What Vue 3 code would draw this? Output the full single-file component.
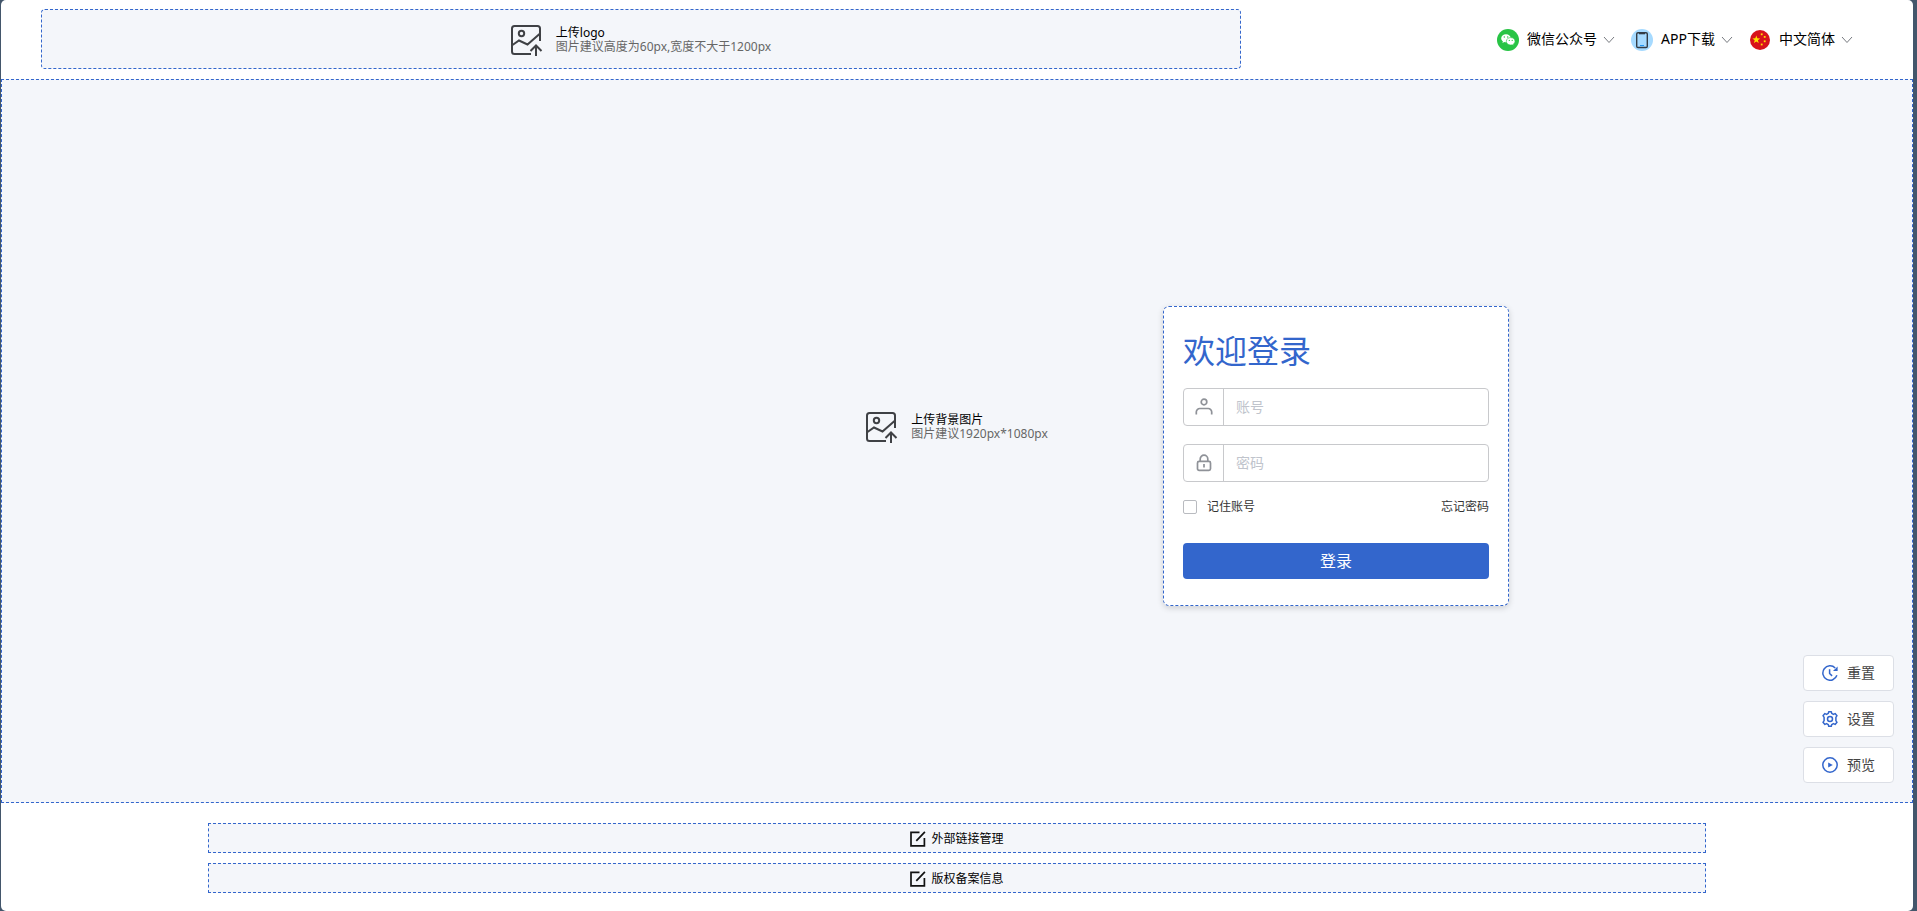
<template>
  <div class="login-page">
    <header class="header">
      <button type="button" class="logo-upload dashed">
        <svg class="upload-icon" viewBox="1 0 32 32">
          <path :d="uploadPath" />
          <circle cx="11.5" cy="9.5" r="2.7" />
        </svg>
        <span class="upload-text">
          <span class="upload-title">上传logo</span>
          <span class="upload-tip">图片建议高度为60px,宽度不大于1200px</span>
        </span>
      </button>

      <nav class="nav">
        <button type="button" class="nav-item">
          <svg class="nav-icon" viewBox="0 0 22 22">
            <circle cx="11" cy="11" r="11" fill="#28c445" />
            <path d="M9 5.2c-2.8 0-4.8 1.8-4.8 4 0 1.3.7 2.4 1.7 3.1l-.5 1.6 1.9-.9c.6.1 1.1.2 1.7.2 2.7 0 4.8-1.8 4.8-4s-2.1-4-4.8-4z" fill="#fff" />
            <path d="M13.7 8.6c-2.5 0-4.4 1.6-4.4 3.7s1.9 3.7 4.4 3.7c.5 0 1-.1 1.5-.2l1.5.8-.4-1.4c1-.7 1.7-1.7 1.7-2.9 0-2.1-1.9-3.7-4.3-3.7z" fill="#fff" stroke="#28c445" stroke-width=".6" />
            <g fill="#28c445">
              <circle cx="7.3" cy="8" r=".7" />
              <circle cx="10.7" cy="8" r=".7" />
              <circle cx="12.3" cy="11.4" r=".6" />
              <circle cx="15.2" cy="11.4" r=".6" />
            </g>
          </svg>
          <span class="nav-label">微信公众号</span>
          <svg class="arrow" viewBox="0 0 14 14"><path d="M2 4l5 5.5L12 4" /></svg>
        </button>
        <button type="button" class="nav-item">
          <svg class="nav-icon" viewBox="0 0 22 22">
            <circle cx="11" cy="11" r="11" fill="#a6daff" />
            <rect x="5.7" y="3.7" width="10.6" height="14.8" rx="1.3" fill="none" stroke="#333b44" stroke-width="1.4" />
            <path d="M8 4h6v1.3H8z" fill="#333b44" />
            <path d="M9 16.5h4" stroke="#2196f3" stroke-width="1" />
          </svg>
          <span class="nav-label">APP下载</span>
          <svg class="arrow" viewBox="0 0 14 14"><path d="M2 4l5 5.5L12 4" /></svg>
        </button>
        <button type="button" class="nav-item">
          <svg class="nav-icon" viewBox="0 0 22 22">
            <circle cx="11" cy="11" r="10" fill="#d8131b" />
            <g fill="#ffe100">
              <path d="M7.3 6.6l1 2.7 2.9.1-2.3 1.8.8 2.8-2.4-1.6L4.9 14l.8-2.8-2.3-1.8 2.9-.1z" />
              <rect x="11.8" y="4.4" width="1.8" height="1.8" />
              <rect x="14.8" y="7" width="1.8" height="1.8" />
              <rect x="14.8" y="11.4" width="1.8" height="1.8" />
              <rect x="11.8" y="14.6" width="1.8" height="1.8" />
            </g>
          </svg>
          <span class="nav-label">中文简体</span>
          <svg class="arrow" viewBox="0 0 14 14"><path d="M2 4l5 5.5L12 4" /></svg>
        </button>
      </nav>
    </header>

    <main class="main dashed">
      <button type="button" class="bg-upload">
        <svg class="upload-icon" viewBox="1 0 32 32">
          <path :d="uploadPath" />
          <circle cx="11.5" cy="9.5" r="2.7" />
        </svg>
        <span class="upload-text">
          <span class="upload-title">上传背景图片</span>
          <span class="upload-tip">图片建议1920px*1080px</span>
        </span>
      </button>

      <form class="login-card dashed" @submit.prevent>
        <h1 class="login-title">欢迎登录</h1>
        <div class="field">
          <label class="field-prefix" for="account" aria-label="账号">
            <svg viewBox="0 0 18 18">
              <circle cx="9" cy="4" r="2.8" />
              <path d="M1.3 16.5V14a3.5 3.5 0 0 1 3.5-3.5h8.4a3.5 3.5 0 0 1 3.5 3.5v2.5" />
            </svg>
          </label>
          <input id="account" v-model="form.account" type="text" placeholder="账号" />
        </div>
        <div class="field">
          <label class="field-prefix" for="password" aria-label="密码">
            <svg viewBox="0 0 18 18">
              <rect x="2.5" y="7.3" width="13" height="9" rx="1.6" />
              <path d="M5.2 7V5a3.8 3.8 0 0 1 7.6 0v2M9 10v3.4" />
            </svg>
          </label>
          <input id="password" v-model="form.password" type="password" placeholder="密码" />
        </div>
        <div class="options">
          <label class="remember">
            <input v-model="form.remember" type="checkbox" />
            <span>记住账号</span>
          </label>
          <a href="#">忘记密码</a>
        </div>
        <button type="submit" class="submit">登录</button>
      </form>

      <div class="tools">
        <button type="button" class="tool">
          <svg viewBox="0 0 16 16">
            <path d="M14.9 10.3A7.2 7.2 0 1 1 13.2 3M7.6 4.3v4.2l2.5 2.4" />
            <path class="solid" d="M15.6 1.4v4.7h-4.6z" />
          </svg>
          <span>重置</span>
        </button>
        <button type="button" class="tool">
          <svg viewBox="0 0 16 16">
            <path d="M6.3 2.4 6.7.8h2.6l.4 1.6 1.7 1 1.7-.8 1.9 2.1-1.1 1.6v3.4l1.1 1.6-1.9 2.1-1.7-.8-1.7 1-.4 1.6H6.7l-.4-1.6-1.7-1-1.7.8L1 11.3l1.1-1.6V6.3L1 4.7l1.9-2.1 1.7.8z" />
            <circle cx="8" cy="8" r="2.5" />
          </svg>
          <span>设置</span>
        </button>
        <button type="button" class="tool">
          <svg viewBox="0 0 16 16">
            <circle cx="8" cy="8" r="7.2" />
            <path class="solid" d="M6.2 5.4 10.8 8l-4.6 2.6z" />
          </svg>
          <span>预览</span>
        </button>
      </div>
    </main>

    <footer class="footer">
      <button v-for="item in footerItems" :key="item" type="button" class="footer-item dashed">
        <svg viewBox="0 0 16 16">
          <path d="M9.5 1.4H1v13.4h13.4V7M6.3 9.8l8.6-9" />
        </svg>
        <span>{{ item }}</span>
      </button>
    </footer>
  </div>
</template>

<script setup>
import { reactive } from 'vue';

// Picture frame, hill line and upload arrow
const uploadPath =
  'M30 17V4.5A2.5 2.5 0 0 0 27.5 2h-23A2.5 2.5 0 0 0 2 4.5v23A2.5 2.5 0 0 0 4.5 30H21M2.5 21 9 16.5l8.5 4L29.5 10M26 32V22M20.5 27l5.5-5.5 5.5 5.5';

const footerItems = ['外部链接管理', '版权备案信息'];

const form = reactive({
  account: '',
  password: '',
  remember: false
});
</script>

<style>
body {
  background: #43566b;
}
</style>

<style scoped>
.login-page,
.login-page * {
  box-sizing: border-box;
}

.login-page {
  display: flex;
  flex-direction: column;
  min-height: 100vh;
  margin: 0 4px 0 1px;
  border-radius: 5px;
  background: #fff;
  color: #000;
  font-family: "Noto Sans", "Noto Sans CJK SC", sans-serif;
  font-size: 14px;
  line-height: 20px;
}

button,
input {
  margin: 0;
  padding: 0;
  border: 0;
  background: none;
  color: inherit;
  font: inherit;
}

button {
  cursor: pointer;
}

svg {
  flex: none;
  fill: none;
}

.dashed {
  border: 1px dashed #3366cc;
}

/* Header */
.header {
  display: flex;
  justify-content: space-between;
  align-items: flex-start;
  padding: 9px 59px 10px 40px;
}

.logo-upload {
  display: flex;
  justify-content: center;
  align-items: center;
  flex: 0 1 1200px;
  height: 60px;
  padding-top: 2px;
  border-radius: 4px;
  background: #f4f6fa;
}

.upload-icon {
  width: 32px;
  height: 32px;
  margin-right: 13px;
  stroke: #3f4145;
  stroke-width: 2;
}

.upload-text {
  display: flex;
  flex-direction: column;
  font-size: 12px;
  line-height: 14px;
  text-align: left;
}

.upload-tip {
  color: #666;
}

.nav {
  display: flex;
  gap: 15px;
  padding-top: 20px;
}

.nav-item {
  display: flex;
  align-items: center;
  white-space: nowrap;
}

.nav-icon {
  width: 22px;
  height: 22px;
  margin-right: 8px;
}

.nav-label {
  padding-bottom: 2px;
}

.arrow {
  width: 14px;
  height: 14px;
  margin-left: 5px;
  stroke: #777a80;
}

/* Background area, its layers share one grid cell */
.main {
  display: grid;
  flex: 1;
  background: #f4f6fa;
}

.main > * {
  grid-area: 1 / 1;
}

.bg-upload {
  display: flex;
  justify-content: center;
  align-items: center;
  padding-bottom: 28px;
}

.login-card {
  place-self: center end;
  width: 346px;
  margin: 30px 403px 0 0;
  padding: 20px 19px 26px;
  border-radius: 6px;
  background: #fff;
  box-shadow: 0 2px 6px rgba(0, 0, 0, 0.16);
}

.login-title {
  margin: 0 0 13px;
  color: #3366cc;
  font-size: 32px;
  font-weight: 400;
  line-height: 48px;
}

.field {
  display: flex;
  height: 38px;
  margin-bottom: 18px;
  border: 1px solid #c8c9cc;
  border-radius: 4px;
}

.field-prefix {
  display: flex;
  justify-content: center;
  align-items: center;
  width: 40px;
  border-right: 1px solid #c8c9cc;
}

.field-prefix svg {
  width: 18px;
  height: 18px;
  stroke: #8f9298;
  stroke-width: 1.7;
}

.field input {
  flex: 1;
  min-width: 0;
  padding: 0 12px;
  outline: none;
}

.field input::placeholder {
  color: #c0c4cc;
}

.options {
  display: flex;
  justify-content: space-between;
  margin-bottom: 29px;
  color: #333;
  font-size: 12px;
  line-height: 14px;
}

.options a {
  color: inherit;
  text-decoration: none;
}

.remember {
  display: flex;
  align-items: center;
  gap: 10px;
}

.remember input {
  width: 14px;
  height: 14px;
  border: 1px solid #b9bbc0;
  border-radius: 2px;
  background: #fff;
  appearance: none;
}

.remember input:checked {
  background: #3366cc;
}

.submit {
  display: block;
  width: 100%;
  height: 36px;
  border-radius: 4px;
  background: #3366cc;
  color: #fff;
  font-size: 16px;
}

.tools {
  display: flex;
  flex-direction: column;
  gap: 10px;
  place-self: end;
  margin: 0 18px 19px 0;
}

.tool {
  display: flex;
  justify-content: center;
  align-items: center;
  gap: 9px;
  width: 91px;
  height: 36px;
  border: 1px solid #dcdfe6;
  border-radius: 4px;
  background: #fff;
  color: #444;
}

.tool svg {
  width: 16px;
  height: 16px;
  stroke: #3366cc;
  stroke-width: 1.5;
  stroke-linejoin: round;
}

.tool .solid {
  fill: #3366cc;
  stroke: none;
}

/* Footer */
.footer {
  display: flex;
  flex-direction: column;
  gap: 10px;
  padding: 20px 207px 18px;
}

.footer-item {
  display: flex;
  justify-content: center;
  align-items: center;
  gap: 5px;
  height: 30px;
  padding-top: 2px;
  background: #f4f6fa;
  font-size: 12px;
}

.footer-item svg {
  width: 16px;
  height: 16px;
  stroke: #111;
  stroke-width: 1.7;
}
</style>
